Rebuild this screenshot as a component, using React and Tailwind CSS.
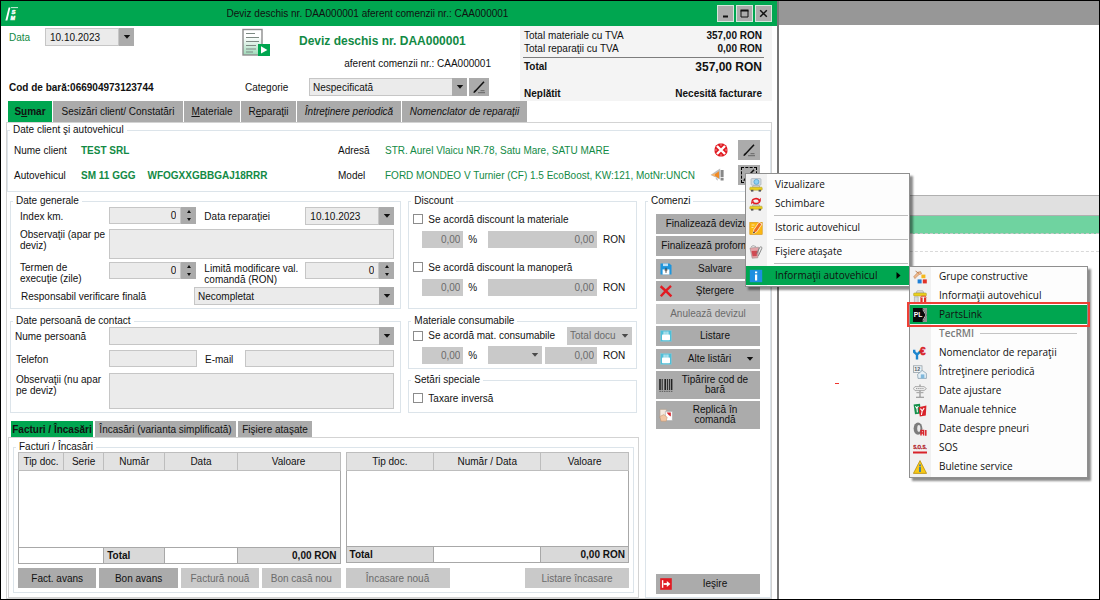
import React from "react";

/* ---------- icons ---------- */

const Svg = ({ children, className = "size-3.5", box = "0 0 14 14" }) => (
  <svg viewBox={box} className={`${className} shrink-0`} fill="none" aria-hidden="true">
    {children}
  </svg>
);

const Caret = ({ className = "w-[9px] h-[5px] text-black" }) => (
  <Svg box="0 0 9 5" className={className}>
    <path d="M0.5 0h8L4.5 4.6z" fill="currentColor" />
  </Svg>
);

const Logo = () => (
  <Svg box="0 0 14 14" className="size-[14px]">
    <path d="M3.6 0.5h1.8L2.4 13.5H0.4z" fill="#fff" />
    <path d="M6 0.6h7" stroke="#fff" strokeWidth="0.8" />
    <text x="6.4" y="6.6" fontSize="6" fontWeight="700" fontStyle="italic" fill="#fff" stroke="#fff" strokeWidth="0.4" fontFamily="Liberation Sans, sans-serif">S</text>
    <text x="5.4" y="12.7" fontSize="5.4" fontWeight="700" fontStyle="italic" fill="#fff" stroke="#fff" strokeWidth="0.4" fontFamily="Liberation Sans, sans-serif">M</text>
  </Svg>
);

const DocumentIcon = () => (
  <Svg box="0 0 28 28" className="size-7">
    <defs>
      <linearGradient id="sheet" x1="0" y1="0" x2="0" y2="1">
        <stop offset="0.3" stopColor="#fff" />
        <stop offset="1" stopColor="#9ed9b8" />
      </linearGradient>
    </defs>
    <rect x="1" y="1.5" width="19" height="25.5" fill="url(#sheet)" stroke="#8d8d8d" strokeWidth="1.4" />
    <path d="M4 5.5h9M4 9.5h13M4 13.5h13M4 17.5h10M4 21h10M4 24h7" stroke="#7d8a83" strokeWidth="1.2" />
    <rect x="16" y="16" width="12" height="12" fill="#00a650" />
    <path d="M19 18.2v7.4l6.4-3.7z" fill="#fff" />
  </Svg>
);

const PenIcon = () => (
  <Svg box="0 0 14 14">
    <path d="M2 12.5L12 1.8" stroke="#111" strokeWidth="1.5" />
    <path d="M1 13l2.2-3.2 1 1z" fill="#111" />
    <path d="M8.5 10.7h4M6 12.7h7" stroke="#666" strokeWidth="1" />
  </Svg>
);

const ClearIcon = () => (
  <Svg>
    <circle cx="7" cy="7" r="6.7" fill="#e11b22" />
    <path d="M3 3l8 8M11 3l-8 8" stroke="#fff" strokeWidth="2.4" />
    <path d="M7 0v3M7 11v3M0 7h3M11 7h3" stroke="#fff" strokeWidth="0.5" />
  </Svg>
);

const HornIcon = () => (
  <Svg>
    <path d="M0.5 7L7 2.6l3.2-2v10.8L6 9.6z" fill="#bdbdbd" />
    <path d="M3.5 7L9 3.2v7.4z" fill="#f08a24" />
    <path d="M1 6.8l4-1.6v3.6z" fill="#f6b36b" />
    <path d="M10.6 2h3v7h-3zM10.6 9.8h3v2.6h-3z" fill="#888" />
    <path d="M5.5 10l2 .8v2z" fill="#999" />
  </Svg>
);

const Car = () => (
  <>
    <path d="M3.2 9.4l1.2-2.2h5.4l1.2 2.2z" fill="#d9d9d9" stroke="#999" strokeWidth="0.6" />
    <rect x="0.8" y="9.2" width="12.4" height="3" rx="0.8" fill="#ead01d" stroke="#a6952a" strokeWidth="0.5" />
    <rect x="2" y="11.8" width="2.4" height="1.8" fill="#555" />
    <rect x="9.6" y="11.8" width="2.4" height="1.8" fill="#555" />
  </>
);

const CarViewIcon = () => (
  <Svg>
    <Car />
    <rect x="2" y="0.6" width="10" height="6.6" rx="1" fill="#d5dde3" stroke="#9aa5ad" strokeWidth="0.6" />
    <circle cx="7.4" cy="3.9" r="2.5" fill="#8ed0f4" stroke="#4c9bc9" strokeWidth="0.7" />
  </Svg>
);

const CarSwapIcon = () => (
  <Svg>
    <Car />
    <path d="M3.2 4.2a3.8 2.8 0 0 1 7-1.2M10.8 4a3.8 2.8 0 0 1-7 1.2" stroke="#e11b22" strokeWidth="1.6" />
    <path d="M11.8 0.8v3.4H8.6zM2.2 7.4V4.2h3z" fill="#e11b22" />
  </Svg>
);

const HistoryIcon = () => (
  <Svg>
    <rect x="0.8" y="1.4" width="12.4" height="12" fill="#fbb814" stroke="#d18f10" strokeWidth="0.6" />
    <path d="M2.5 4h3M2.5 6.5h2" stroke="#fbe2a0" />
    <path d="M4 12.6l.8-3.8L10 1.2l3 1.8-5.2 7.8z" fill="#ee6f1e" stroke="#fff" strokeWidth="0.7" />
    <path d="M4 12.6l.5-2.2 1.6 1z" fill="#333" />
  </Svg>
);

const AttachIcon = () => (
  <Svg>
    <path d="M1 3l8.6-.8-.8 10.6-5.6.4z" fill="#e3a3a7" stroke="#9b8b8c" strokeWidth="0.6" />
    <path d="M2.6 6l5.6-.3-.5 5.2-4.2.3z" fill="#cf4a53" />
    <path d="M9.4 10.8l3.4-7.4c.4-1.6-1.4-2.2-2-1L7.6 8.8" stroke="#777" strokeWidth="0.9" />
    <path d="M2 2l2-1.4 3 1" stroke="#aaa" />
  </Svg>
);

const InfoIcon = () => (
  <Svg>
    <rect x="0.8" y="0.8" width="12.4" height="12.4" fill="#1d8fe0" />
    <path d="M6 2.4h2.2v1.8H6zM6 5.4h2.2v6H6z" fill="#fff" />
  </Svg>
);

const GroupsIcon = () => (
  <Svg>
    <path d="M0.8 6.6L5 2.2l2.6-.6 1 2.2-2.6.8-4.2 4z" fill="#f0b98b" stroke="#b97d4f" strokeWidth="0.6" />
    <path d="M2.6 1.2l3.4 2.2" stroke="#b97d4f" strokeWidth="1" />
    <rect x="8.4" y="4.6" width="4" height="3.6" fill="#f5b81c" />
    <rect x="4.6" y="9.4" width="4" height="4" fill="#1d7fd6" />
    <rect x="9.8" y="9.4" width="4" height="4" fill="#e03127" />
  </Svg>
);

const CarInfoIcon = () => (
  <Svg>
    <path d="M3 4l1.2-2.2h5.6L11 4z" fill="#e3e3e3" stroke="#999" strokeWidth="0.6" />
    <rect x="0.6" y="4" width="12.8" height="3" rx="0.8" fill="#ead01d" stroke="#a6952a" strokeWidth="0.5" />
    <path d="M1.4 7.8h3.8v6H1.4z" fill="#d9dde0" stroke="#999" strokeWidth="0.5" />
    <path d="M7.4 14V8.6h2.2V14zM11 14V8.6h2.2V14z" fill="#e03127" />
    <path d="M7.4 8.6l1-1.4h4l.8 1.4" stroke="#e03127" strokeWidth="0.8" />
  </Svg>
);

const PartsLinkIcon = () => (
  <Svg>
    <rect width="14" height="14" fill="#8c9490" />
    <path d="M0 0h9.4l4.2 7-4.2 7H0z" fill="#0b0b0b" />
    <path d="M9.8 1.6L13 7l-3.2 5.4" stroke="#e6e6e6" strokeWidth="0.8" />
    <text x="0.8" y="9.4" fontSize="6.8" fontWeight="700" fill="#fff" fontFamily="Liberation Sans, sans-serif">PL</text>
  </Svg>
);

const WrenchEuroIcon = () => (
  <Svg>
    <path d="M1.2 3.8v2.2l2.8 2.6 2.6-2.4v-1M4 8V13.6" stroke="#1d86cf" strokeWidth="2.4" />
    <text x="6.8" y="8.6" fontSize="10.5" fontWeight="700" fill="#d8232a" stroke="#d8232a" strokeWidth="0.5" fontFamily="Liberation Sans, sans-serif">€</text>
  </Svg>
);

const PeriodicIcon = () => (
  <Svg>
    <rect x="0.6" y="0.8" width="8.4" height="6.6" fill="#eef2f4" stroke="#8b979f" strokeWidth="0.7" />
    <text x="1.2" y="6.2" fontSize="5.4" fontWeight="700" fill="#56626a" fontFamily="Liberation Sans, sans-serif">12</text>
    <path d="M4.6 9.4L9.2 5.4l4.2 3v5H5z" fill="#e6f0f6" stroke="#7c97a8" strokeWidth="0.7" />
    <rect x="7.8" y="9.4" width="3.6" height="4" fill="#7fb8dc" />
  </Svg>
);

const SignpostIcon = () => (
  <Svg>
    <path d="M7 0.4v12.6M3 13.2h8" stroke="#8a8a8a" strokeWidth="1.1" />
    <path d="M2 2.6h9l2.4 2-2.4 2H2L0.4 4.6z" fill="#efefef" stroke="#999" strokeWidth="0.8" />
    <path d="M3 4.6h7.6" stroke="#999" strokeDasharray="1.4 .7" />
    <path d="M3.4 8.6h7" stroke="#aaa" strokeWidth="1.2" />
  </Svg>
);

const ManualsIcon = () => (
  <Svg>
    <path d="M0.6 1.4L7 0.8l.8 9.6-5.8.8z" fill="#14904a" />
    <path d="M5.6 4.2l7.8-1.6-.6 9.8-6 1z" fill="#d8232a" />
    <path d="M2.4 3.2l1.4 2 1.6-2.2M4 5.4l.4 4M7.4 5.6l1.8 2.2 2-2.6M9.2 7.8L8.4 12" stroke="#fff" strokeWidth="1.1" />
  </Svg>
);

const TireIcon = () => (
  <Svg>
    <ellipse cx="5" cy="6.6" rx="4.4" ry="6.2" fill="#7c7c7c" />
    <ellipse cx="5.8" cy="6.4" rx="1.6" ry="3.4" fill="#e9e9e9" />
    <path d="M8 13.6V8.4h2.6v5.2M8 11h2.6M12.8 8v5.8" stroke="#d8232a" strokeWidth="1.5" />
  </Svg>
);

const SosIcon = () => (
  <Svg>
    <text x="0.2" y="7.6" fontSize="4.6" fontWeight="700" fill="#b3262c" stroke="#b3262c" strokeWidth="0.3" fontFamily="Liberation Sans, sans-serif">S.O.S.</text>
    <path d="M0 11.5h14" stroke="#d8232a" strokeWidth="2" />
  </Svg>
);

const WarningIcon = () => (
  <Svg>
    <path d="M7 0.6L13.6 13.4H0.4z" fill="#f7c815" stroke="#b78f10" strokeWidth="0.8" strokeLinejoin="round" />
    <path d="M6.2 4.6h1.6v1.6H6.2zM6.2 7h1.6v5H6.2z" fill="#1d6fc0" />
  </Svg>
);

const SaveIcon = () => (
  <Svg>
    <path d="M1.5 1.5h9l2 2v9h-11z" fill="#1e96dd" />
    <rect x="4" y="1.5" width="5" height="2.6" fill="#bfe0f5" />
    <path d="M3.6 12.5V7.4h6.8v5.1z" fill="#fff" />
    <path d="M7 5.8v5M5.6 8h2.8" stroke="#333" strokeWidth="0.9" />
  </Svg>
);

const CrossIcon = () => (
  <Svg>
    <path d="M1.6 2.2C5 5 9 9 12.4 12.4M12 1.8C8.6 4.8 5 8.6 1.8 12.2" stroke="#e11b22" strokeWidth="2.4" />
  </Svg>
);

const PrintIcon = () => (
  <Svg>
    <rect x="1.5" y="1.5" width="11" height="11" fill="#4ebfd8" stroke="#8fc3cf" strokeWidth="0.6" />
    <path d="M4.6 2.4h1v3.4h-1zM6.5 2.4h1v3.4h-1zM8.4 2.4h1v3.4h-1z" fill="#e8f6fa" />
    <rect x="3" y="5.4" width="8" height="5.8" rx="0.8" fill="#fff" />
  </Svg>
);

const BarcodeIcon = () => (
  <Svg>
    <path d="M1 1v11M6.2 1v11M12.6 1v11" stroke="#222" strokeWidth="1.6" />
    <path d="M3.2 1v11M8.4 1v11M10.4 1v11" stroke="#222" strokeWidth="1" />
    <path d="M0.4 13.3h13" stroke="#555" strokeDasharray="1.5 .8" />
  </Svg>
);

const CopyIcon = () => (
  <Svg>
    <path d="M1 1.4h6.4v8.4H1z" fill="#f5e9de" stroke="#b29c8a" strokeWidth="0.6" />
    <path d="M6.4 3.4h7v9.2h-7z" fill="#fff" stroke="#a8a8a8" strokeWidth="0.6" />
    <path d="M7.6 4.4h4.2v4.2L9.6 7z" fill="#d8232a" />
    <path d="M0.8 8.6l4-2 3.4 2.6-1 4H2z" fill="#f2c6a3" stroke="#bb8e6b" strokeWidth="0.5" />
  </Svg>
);

const ExitIcon = () => (
  <Svg>
    <rect x="1.2" y="1.2" width="11.6" height="11.6" fill="#e11b22" />
    <path d="M3.6 3.2v7.6" stroke="#fff" strokeWidth="1.4" />
    <path d="M4.6 7h4" stroke="#fff" strokeWidth="1.8" />
    <path d="M7.8 4l3.6 3-3.6 3z" fill="#fff" />
  </Svg>
);

/* ---------- form parts ---------- */

const Group = ({ title, tight, className = "", children }) => (
  <fieldset className={`min-w-0 border border-[#dce4ea] ${className}`}>
    <legend className={`ml-[2px] px-[3px] ${tight ? "leading-[10px]" : "leading-3"}`}>{title}</legend>
    {children}
  </fieldset>
);

const field = "min-w-0 w-full border border-[#c6c6c6] bg-[#ebebeb] px-1 outline-none";

const SelectBox = ({ label, value, disabled, className = "", id }) => (
  <div className={`relative h-[18px] ${className}`}>
    <select
      id={id}
      aria-label={label}
      disabled={disabled}
      className={`block h-full w-full appearance-none pl-[3px] pr-4 outline-none ${
        disabled ? "bg-[#c9c9c9] text-[#6b6b6b]" : "border border-[#c6c6c6] bg-[#ebebeb]"
      }`}
    >
      <option>{value}</option>
    </select>
    <span
      className={`pointer-events-none absolute inset-y-0 right-0 flex w-[15px] items-center justify-center ${
        disabled ? "text-[#4a4a4a]" : "bg-[#ababab]"
      }`}
    >
      <Caret className="w-[8px] h-[4px]" />
    </span>
  </div>
);

const DateBox = ({ id, value }) => (
  <div className="flex h-[18px] w-[89px]">
    <input id={id} defaultValue={value} className={field} />
    <button aria-label="Alege data" className="flex w-[15px] shrink-0 items-center justify-center bg-[#ababab]">
      <Caret className="w-[8px] h-[4px]" />
    </button>
  </div>
);

const Spinner = ({ id, className = "" }) => (
  <div className={`flex h-[17px] min-w-0 ${className}`}>
    <input id={id} defaultValue="0" className={`${field} text-right`} />
    <span className="flex w-[15px] shrink-0 flex-col bg-[#ababab]">
      <button aria-label="Crește" className="flex flex-1 items-center justify-center">
        <Svg box="0 0 4 3" className="w-[4px] h-[3px]"><path d="M2 0l2 3H0z" fill="#111" /></Svg>
      </button>
      <button aria-label="Scade" className="flex flex-1 items-center justify-center">
        <Svg box="0 0 4 3" className="w-[4px] h-[3px]"><path d="M0 0h4L2 3z" fill="#111" /></Svg>
      </button>
    </span>
  </div>
);

const Check = ({ children }) => (
  <label className="flex h-3 items-center gap-[5px] whitespace-nowrap">
    <input type="checkbox" className="size-[10px] shrink-0 appearance-none border border-[#8c8c8c] bg-white" />
    {children}
  </label>
);

const Amount = ({ label, className }) => (
  <input
    aria-label={label}
    disabled
    defaultValue="0,00"
    className={`h-[17px] min-w-0 bg-[#c9c9c9] px-[3px] text-right text-[#6b6b6b] ${className}`}
  />
);

const DiscountRow = ({ name }) => (
  <div className="flex items-center pl-[9px]">
    <Amount label={`${name} procent`} className="w-[41px]" />
    <span className="w-[25px] pl-[5px]">%</span>
    <Amount label={`${name} valoare`} className="flex-1" />
    <span className="w-[39px] shrink-0 pl-[6px]">RON</span>
  </div>
);

const IconButton = ({ label, focused, className = "" }) => (
  <button aria-label={label} className={`flex h-5 w-[22px] items-center justify-center bg-[#ababab] ${className}`}>
    <span className={focused ? "border border-dashed border-black" : ""}>
      <PenIcon />
    </span>
  </button>
);

const Command = ({ icon, children, caret, disabled, tall }) => (
  <button
    disabled={disabled}
    className={`flex w-full items-center whitespace-nowrap px-[3px] leading-[10px] ${tall ? "h-7" : "h-5"} ${
      disabled ? "bg-[#c9c9c9] text-[#6b6b6b]" : "bg-[#ababab]"
    }`}
  >
    {icon}
    <span className="flex-1 text-center">{children}</span>
    {caret && <Caret className="mr-[3px] w-[8px] h-[4px]" />}
  </button>
);

const ActionButton = ({ children, disabled, className = "" }) => (
  <button
    disabled={disabled}
    className={`h-5 whitespace-nowrap ${disabled ? "bg-[#c9c9c9] text-[#6b6b6b]" : "bg-[#ababab]"} ${className}`}
  >
    {children}
  </button>
);

const Tab = ({ active, className = "", children }) => (
  <button
    role="tab"
    aria-selected={!!active}
    className={`whitespace-nowrap ${active ? "bg-[#00a650] font-bold" : "bg-[#ababab]"} ${className}`}
  >
    {children}
  </button>
);

/* ---------- menus ---------- */

const menuBox =
  "absolute border border-[#8f8f8f] bg-[linear-gradient(to_right,#f1f1f1_21px,#fdfdfd_21px)] shadow-[3px_3px_2px_rgba(0,0,0,0.45)] font-['Open_Sans','Noto_Sans',sans-serif] text-[10px]";

const MenuItem = ({ icon, label, active, arrow, children }) => (
  <li role="none" className={`relative ${active ? "bg-[#00a650]" : ""}`}>
    <button role="menuitem" className="flex h-[19px] w-full items-center whitespace-nowrap pl-[3px] text-left">
      {icon}
      <span className="flex-1 pl-3">{label}</span>
      {arrow && (
        <Svg box="0 0 5 7" className="mr-2 w-[5px] h-[7px]"><path d="M0.5 0v7l4-3.5z" fill="#000" /></Svg>
      )}
    </button>
    {children}
  </li>
);

const MenuLine = () => <li role="separator" className="ml-7 mt-[2px] mb-[2px] mr-px h-px bg-[#bdbdbd]" />;

const Submenu = () => (
  <ul role="menu" className={`${menuBox} left-full top-0 w-[179px] pb-px`}>
    <MenuItem icon={<GroupsIcon />} label="Grupe constructive" />
    <MenuItem icon={<CarInfoIcon />} label="Informaţii autovehicul" />
    <MenuItem icon={<PartsLinkIcon />} label="PartsLink" active>
      <span className="pointer-events-none absolute -inset-[3px] border-2 border-[#ee4036]" />
    </MenuItem>
    <li className="flex h-[19px] items-center gap-[6px] pl-[29px] pr-[10px] font-semibold text-[#7c7c7c]">
      TecRMI
      <span className="h-px flex-1 bg-[#c4c4c4]" />
    </li>
    <MenuItem icon={<WrenchEuroIcon />} label="Nomenclator de reparaţii" />
    <MenuItem icon={<PeriodicIcon />} label="Întreţinere periodică" />
    <MenuItem icon={<SignpostIcon />} label="Date ajustare" />
    <MenuItem icon={<ManualsIcon />} label="Manuale tehnice" />
    <MenuItem icon={<TireIcon />} label="Date despre pneuri" />
    <MenuItem icon={<SosIcon />} label="SOS" />
    <MenuItem icon={<WarningIcon />} label="Buletine service" />
  </ul>
);

const VehicleMenu = () => (
  <ul role="menu" className={`${menuBox} left-[7px] top-2 z-10 w-[165px] py-px`}>
    <MenuItem icon={<CarViewIcon />} label="Vizualizare" />
    <MenuItem icon={<CarSwapIcon />} label="Schimbare" />
    <MenuLine />
    <MenuItem icon={<HistoryIcon />} label="Istoric autovehicul" />
    <MenuLine />
    <MenuItem icon={<AttachIcon />} label="Fişiere ataşate" />
    <MenuLine />
    <MenuItem icon={<InfoIcon />} label="Informaţii autovehicul" active arrow>
      <Submenu />
    </MenuItem>
  </ul>
);

/* ---------- sections ---------- */

const TitleBar = () => (
  <header className="flex h-[25px] items-center bg-[#00a650] pl-1 pr-[5px]">
    <Logo />
    <h1 className="flex-1 pr-px text-center text-[10px]">
      Deviz deschis nr. DAA000001 aferent comenzii nr.: CAA000001
    </h1>
    <div className="flex gap-[2px]">
      <button aria-label="Minimizare" className="flex size-[17px] items-center justify-center border border-[#d5e8dc] bg-[#ababab]">
        <Svg box="0 0 9 9" className="size-[9px]"><path d="M2 7.5h5" stroke="#111" strokeWidth="2" /></Svg>
      </button>
      <button aria-label="Maximizare" className="flex size-[17px] items-center justify-center border border-[#d5e8dc] bg-[#ababab]">
        <Svg box="0 0 9 9" className="size-[9px]"><path d="M1 1.5h7v6.5H1z" stroke="#111" /><path d="M0.5 1.5h8" stroke="#111" strokeWidth="2" /></Svg>
      </button>
      <button aria-label="Închidere" className="flex size-[17px] items-center justify-center border border-[#d5e8dc] bg-[#ababab]">
        <Svg box="0 0 9 9" className="size-[9px]"><path d="M1.2 1.2l6.6 6.6M7.8 1.2L1.2 7.8" stroke="#111" strokeWidth="1.5" /></Svg>
      </button>
    </div>
  </header>
);

const Header = () => (
  <div className="flex h-[75px] pl-2 pr-[5px]">
    <div className="flex min-w-0 flex-1 flex-col justify-between pt-[2px] pb-[5px]">
      <div className="flex">
        <label htmlFor="data" className="w-9 pt-[2px] text-[#128a45]">Data</label>
        <DateBox id="data" value="10.10.2023" />
        <div className="flex-1" />
        <DocumentIcon />
        <div className="ml-[29px] mr-[29px] w-[192px]">
          <h2 className="pt-1 text-[12px] leading-[18px] font-bold text-[#128a45]">Deviz deschis nr. DAA000001</h2>
          <p className="pt-[8px] text-right leading-3">aferent comenzii nr.: CAA000001</p>
        </div>
      </div>
      <div className="flex items-center">
        <strong>Cod de bară:066904973123744</strong>
        <div className="flex-1" />
        <label htmlFor="categorie" className="w-16">Categorie</label>
        <SelectBox id="categorie" value="Nespecificată" className="w-[158px]" />
        <button aria-label="Editare categorie" className="ml-[2px] mr-[31px] flex h-[18px] w-5 items-center justify-center bg-[#ababab]">
          <PenIcon />
        </button>
      </div>
    </div>
    <dl className="w-[252px] shrink-0 bg-[#f4f4f4] pl-1 pr-[10px] pt-[3px]">
      <div className="flex justify-between leading-[13px]"><dt>Total materiale cu TVA</dt><dd className="font-bold">357,00 RON</dd></div>
      <div className="flex justify-between leading-[13px]"><dt>Total reparaţii cu TVA</dt><dd className="font-bold">0,00 RON</dd></div>
      <div className="-mr-[2px] -ml-px mt-[2px] h-px bg-[#7d7d7d]" />
      <div className="flex items-center justify-between pt-px font-bold leading-4"><dt>Total</dt><dd className="text-[12px]">357,00 RON</dd></div>
      <div className="flex justify-between pt-3 font-bold leading-[14px]"><dt>Neplătit</dt><dd>Necesită facturare</dd></div>
    </dl>
  </div>
);

const ClientGroup = () => (
  <Group title="Date client şi autovehicul">
    <div className="grid grid-cols-[67px_1fr_47px_329px_24px_22px] items-center gap-y-[5px] pt-1 pr-[10px] pb-[6px] pl-[6px]">
      <span>Nume client</span>
      <span className="font-bold text-[#128a45]">TEST SRL</span>
      <span>Adresă</span>
      <span className="text-[#128a45]">STR. Aurel Vlaicu NR.78, Satu Mare, SATU MARE</span>
      <button aria-label="Ștergere client"><ClearIcon /></button>
      <IconButton label="Editare client" />
      <span>Autovehicul</span>
      <span className="flex gap-3 whitespace-nowrap font-bold text-[#128a45]"><span>SM 11 GGG</span><span>WFOGXXGBBGAJ18RRR</span></span>
      <span>Model</span>
      <span className="whitespace-nowrap text-[#128a45]">FORD MONDEO V Turnier (CF) 1.5 EcoBoost, KW:121, MotNr:UNCN</span>
      <button aria-label="Notificare" className="-ml-1"><HornIcon /></button>
      <div className="relative">
        <IconButton label="Opţiuni autovehicul" focused />
        <VehicleMenu />
      </div>
    </div>
  </Group>
);

const GeneralGroup = () => (
  <Group title="Date generale">
    <div className="grid grid-cols-[89px_minmax(0,1fr)_109px_89px] pr-[6px] pb-[3px] pl-[9px] leading-[11px]">
      <label htmlFor="km" className="pt-1">Index km.</label>
      <Spinner id="km" />
      <label htmlFor="datarep" className="pt-1 pl-2">Data reparaţiei</label>
      <DateBox id="datarep" value="10.10.2023" />
      <label htmlFor="obs" className="pt-1">Observaţii (apar pe<br />deviz)</label>
      <textarea id="obs" className={`${field} col-span-3 mt-1 h-[30px] resize-none`} />
      <label htmlFor="termen" className="pt-[3px]">Termen de<br />execuţie (zile)</label>
      <Spinner id="termen" className="mt-[3px]" />
      <label htmlFor="limita" className="pt-1 pl-2 whitespace-nowrap">Limită modificare val.<br />comandă (RON)</label>
      <Spinner id="limita" className="mt-[3px]" />
      <div className="col-span-4 flex items-center pt-[2px]">
        <label htmlFor="resp" className="w-[174px] pl-px">Responsabil verificare finală</label>
        <SelectBox id="resp" value="Necompletat" className="flex-1" />
      </div>
    </div>
  </Group>
);

const ContactGroup = () => (
  <Group title="Date persoană de contact">
    <div className="grid grid-cols-[95px_88px_48px_minmax(0,1fr)] pr-[6px] pb-[3px] pl-[3px] leading-[11px]">
      <label htmlFor="pers" className="pt-1 pl-px">Nume persoană</label>
      <SelectBox id="pers" value="" className="col-span-3" />
      <label htmlFor="tel" className="pt-[9px] pl-[2px]">Telefon</label>
      <input id="tel" className={`${field} mt-[5px] h-[17px]`} />
      <label htmlFor="mail" className="pt-[9px] pl-2">E-mail</label>
      <input id="mail" className={`${field} mt-[5px] h-[17px]`} />
      <label htmlFor="obs2" className="pt-[7px] pl-[2px]">Observaţii (nu apar<br />pe deviz)</label>
      <textarea id="obs2" className={`${field} col-span-3 mt-[6px] h-9 resize-none`} />
    </div>
  </Group>
);

const th = "border border-[#bdbdbd] bg-[#e2e2e2] p-0 font-normal";
const grey = "border border-[#a8a8a8] bg-[#d9d9d9] px-[3px] py-0 font-bold";
const blank = "border border-[#a8a8a8] bg-white p-0";

const InvoiceTable = () => (
  <table className="h-[112px] w-full table-fixed border-collapse border border-[#a8a8a8]">
    <colgroup>
      <col className="w-[14%]" /><col className="w-[12.5%]" /><col className="w-[19%]" /><col className="w-[22.5%]" /><col />
    </colgroup>
    <thead>
      <tr className="h-[18px]">
        {["Tip doc.", "Serie", "Număr", "Data", "Valoare"].map((t) => <th key={t} className={th}>{t}</th>)}
      </tr>
    </thead>
    <tbody><tr><td colSpan={5} /></tr></tbody>
    <tfoot>
      <tr className="h-4">
        <td colSpan={2} className={blank} />
        <td className={grey}>Total</td>
        <td className={blank} />
        <td className={`${grey} text-right`}>0,00 RON</td>
      </tr>
    </tfoot>
  </table>
);

const ReceiptTable = () => (
  <table className="h-[111px] w-full table-fixed border-collapse border border-[#a8a8a8]">
    <colgroup>
      <col className="w-[31%]" /><col className="w-[38%]" /><col />
    </colgroup>
    <thead>
      <tr className="h-[18px]">
        {["Tip doc.", "Număr / Data", "Valoare"].map((t) => <th key={t} className={th}>{t}</th>)}
      </tr>
    </thead>
    <tbody><tr><td colSpan={3} /></tr></tbody>
    <tfoot>
      <tr className="h-4">
        <td className={grey}>Total</td>
        <td className={blank} />
        <td className={`${grey} text-right`}>0,00 RON</td>
      </tr>
    </tfoot>
  </table>
);

const Invoices = () => (
  <section className="mt-2 flex flex-1 flex-col">
    <div role="tablist" className="flex h-4 gap-[2px] pl-[3px]">
      <Tab active className="w-[82px]">Facturi / Încasări</Tab>
      <Tab className="w-[141px]">Încasări (varianta simplificată)</Tab>
      <Tab className="w-[74px]">Fişiere ataşate</Tab>
    </div>
    <div className="flex flex-1 flex-col border border-[#d3d3d3] p-[4px]">
      <Group title="Facturi / Încasări" tight className="flex-1">
        <div className="grid grid-cols-[322fr_283fr] gap-x-[5px] pl-1 pr-1">
          <InvoiceTable />
          <ReceiptTable />
          <div className="mt-1 grid grid-cols-4 gap-[3px]">
            <ActionButton>Fact. avans</ActionButton>
            <ActionButton>Bon avans</ActionButton>
            <ActionButton disabled>Factură nouă</ActionButton>
            <ActionButton disabled>Bon casă nou</ActionButton>
          </div>
          <div className="mt-1 flex justify-between">
            <ActionButton disabled className="w-[104px]">Încasare nouă</ActionButton>
            <ActionButton disabled className="w-[104px]">Listare încasare</ActionButton>
          </div>
        </div>
      </Group>
    </div>
  </section>
);

const Commands = () => (
  <Group title="Comenzi" className="w-[126px] shrink-0">
    <div className="flex h-full flex-col gap-[3px] pt-[7px] pr-[10px] pb-[3px] pl-[10px]">
      <div className="flex flex-col gap-[2px]">
        <Command>Finalizează devizul</Command>
        <Command>Finalizează proforma</Command>
      </div>
      <div className="flex flex-col gap-[2px]">
        <Command icon={<SaveIcon />}>Salvare</Command>
        <Command icon={<CrossIcon />}>Ştergere</Command>
      </div>
      <div className="flex flex-col gap-[2px]">
        <Command disabled>Anulează devizul</Command>
        <Command icon={<PrintIcon />}>Listare</Command>
      </div>
      <div className="flex flex-col gap-[2px]">
        <Command icon={<PrintIcon />} caret>Alte listări</Command>
        <Command icon={<BarcodeIcon />} tall>Tipărire cod de<br />bară</Command>
        <Command icon={<CopyIcon />} tall>Replică în<br />comandă</Command>
      </div>
      <div className="mt-auto">
        <Command icon={<ExitIcon />}>Ieşire</Command>
      </div>
    </div>
  </Group>
);

const Backdrop = () => (
  <aside className="min-w-0">
    <div className="h-6 bg-[#979797]" />
    <div className="h-[170px]" />
    <div className="h-[21px] border-y border-[#b0b0b0] bg-[#e0e0e0]" />
    <div className="h-[18px] border-b border-dashed border-[#c9c9c9] bg-[#6fd3a0]" />
    <div className="h-[18px] border-b border-dashed border-[#d9d9d9]" />
    <div className="mt-[131px] ml-14 h-px w-1 bg-[#f0342c]" />
  </aside>
);

export default function App() {
  return (
    <main className="grid min-h-screen grid-cols-[778fr_320fr] border border-black bg-white font-['Liberation_Sans',Arial,sans-serif] text-[10px] text-[#111]">
      <div className="flex min-w-0 flex-col border-r-2 border-[#777]">
        <TitleBar />
        <Header />
        <div role="tablist" className="flex h-[21px] gap-px pl-[7px]">
          <Tab active className="w-[44px]">S<u>u</u>mar</Tab>
          <Tab className="w-[130px]">Sesizări client/ Constatări</Tab>
          <Tab className="w-[56px]"><u>M</u>ateriale</Tab>
          <Tab className="w-[55px]">R<u>e</u>paraţii</Tab>
          <Tab className="w-[104px] italic">Întreţinere periodică</Tab>
          <Tab className="w-[125px] italic">Nomenclator de reparaţii</Tab>
        </div>
        <div className="mr-[5px] ml-[5px] flex flex-1 flex-col border border-[#d3d3d3] pt-px">
          <ClientGroup />
          <div className="mt-[3px] flex flex-1 gap-[6px] pl-px">
            <div className="flex min-w-0 flex-1 flex-col">
              <div className="grid grid-cols-[minmax(0,392fr)_minmax(0,229fr)] gap-x-[7px] gap-y-[6px] pr-[2px] pl-[2px]">
                <GeneralGroup />
                <Group title="Discount">
                  <div className="flex flex-col pt-[6px] pl-1">
                    <Check>Se acordă discount la materiale</Check>
                    <div className="pt-[6px] pb-[13px]"><DiscountRow name="Discount materiale" /></div>
                    <Check>Se acordă discount la manoperă</Check>
                    <div className="pt-[6px]"><DiscountRow name="Discount manoperă" /></div>
                  </div>
                </Group>
                <ContactGroup />
                <div className="flex flex-col justify-between">
                  <Group title="Materiale consumabile">
                    <div className="pb-1 pl-1">
                      <div className="flex h-[17px] items-center justify-between pr-1">
                        <Check>Se acordă mat. consumabile</Check>
                        <SelectBox label="Bază de calcul" value="Total docu" disabled className="w-[65px]" />
                      </div>
                      <div className="flex items-center pt-[2px] pl-[9px]">
                        <Amount label="Procent materiale consumabile" className="w-[41px]" />
                        <span className="w-[25px] pl-[5px]">%</span>
                        <SelectBox label="Tip valoare" value="" disabled className="w-[54px]" />
                        <Amount label="Valoare materiale consumabile" className="ml-[3px] flex-1" />
                        <span className="w-[39px] shrink-0 pl-[6px]">RON</span>
                      </div>
                    </div>
                  </Group>
                  <Group title="Setări speciale">
                    <div className="pt-[6px] pb-2 pl-1"><Check>Taxare inversă</Check></div>
                  </Group>
                </div>
              </div>
              <Invoices />
            </div>
            <Commands />
          </div>
        </div>
      </div>
      <Backdrop />
    </main>
  );
}
